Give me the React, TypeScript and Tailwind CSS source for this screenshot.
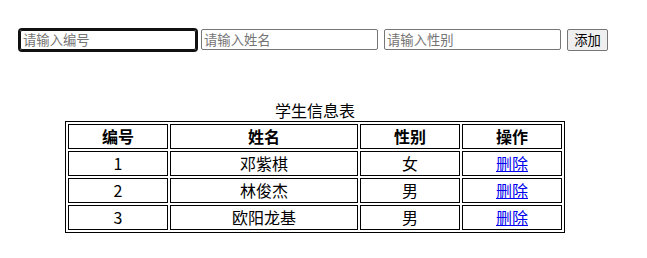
import React from 'react'

const students = [
  { id: 1, name: '邓紫棋', sex: '女' },
  { id: 2, name: '林俊杰', sex: '男' },
  { id: 3, name: '欧阳龙基', sex: '男' },
]

const font = "font-['Microsoft_YaHei','Noto_Sans_CJK_SC',sans-serif]"

export default function App() {
  return (
    <div className={`${font} text-black bg-white min-h-[258px] w-[647px] pt-[28px] pl-[20px]`}>
      <div className="w-[590px]">
        <div className="flex items-center gap-[5px] h-[23px]">
          <input
            placeholder="请输入编号"
            className="w-[176px] h-[20px] px-[2px] text-[13.33px] leading-[18px] rounded-[2px] outline-2 outline-solid outline-[#101010] border border-[#101010] placeholder:text-[#757575]"
          />
          <input
            placeholder="请输入姓名"
            className="w-[177px] h-[21px] px-[2px] text-[13.33px] leading-[19px] rounded-[2px] border border-[#767676] placeholder:text-[#757575]"
          />
          <input
            placeholder="请输入性别"
            className="w-[177px] h-[21px] px-[2px] text-[13.33px] leading-[19px] rounded-[2px] border border-[#767676] placeholder:text-[#757575] ml-[1px]"
          />
          <button className="ml-[1px] w-[41px] h-[22px] text-[13.33px] leading-[18px] bg-[#efefef] border border-[#767676] rounded-[2px]">
            添加
          </button>
        </div>

        <table className="mx-auto mt-[48px] w-[500px] border-separate border-spacing-[2px] border border-black text-[16px]">
          <caption className="leading-[22px]">学生信息表</caption>
          <thead>
            <tr>
              <th className="w-[100px] border border-black p-0 leading-[23px] font-bold">编号</th>
              <th className="w-[188px] border border-black p-0 leading-[23px] font-bold">姓名</th>
              <th className="w-[100px] border border-black p-0 leading-[23px] font-bold">性别</th>
              <th className="w-[100px] border border-black p-0 leading-[23px] font-bold">操作</th>
            </tr>
          </thead>
          <tbody>
            {students.map((s) => (
              <tr key={s.id}>
                <td className="border border-black p-0 leading-[23px] text-center">{s.id}</td>
                <td className="border border-black p-0 leading-[23px] text-center">{s.name}</td>
                <td className="border border-black p-0 leading-[23px] text-center">{s.sex}</td>
                <td className="border border-black p-0 leading-[23px] text-center">
                  <a href="#" className="text-[#0000ee] underline">删除</a>
                </td>
              </tr>
            ))}
          </tbody>
        </table>
      </div>
    </div>
  )
}
